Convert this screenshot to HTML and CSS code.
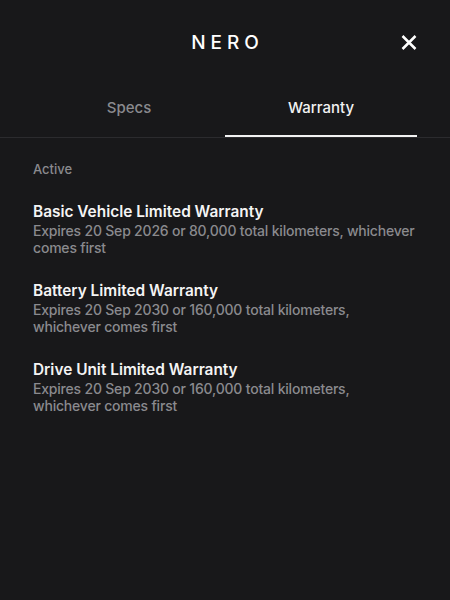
FILE: index.html
```html
<!DOCTYPE html>
<html>
<head>
<meta charset="utf-8">
<link rel="stylesheet" href="styles.css">
</head>
<body>
<div class="panel">
  <header class="header">
    <h1 class="title">NERO</h1>
    <button class="close" aria-label="Close">
      <svg width="16" height="15" viewBox="0 0 16 15"><path d="M1.5 1L14.5 14M14.5 1L1.5 14" stroke="#fff" stroke-width="2.5"/></svg>
    </button>
  </header>
  <nav class="tabs">
    <div class="tab">Specs</div>
    <div class="tab active">Warranty</div>
  </nav>
  <main class="content">
    <div class="section-label">Active</div>
    <div class="item">
      <div class="item-title">Basic Vehicle Limited Warranty</div>
      <div class="item-desc">Expires 20 Sep 2026 or 80,000 total kilometers, whichever comes first</div>
    </div>
    <div class="item">
      <div class="item-title">Battery Limited Warranty</div>
      <div class="item-desc">Expires 20 Sep 2030 or 160,000 total kilometers, whichever comes first</div>
    </div>
    <div class="item">
      <div class="item-title">Drive Unit Limited Warranty</div>
      <div class="item-desc">Expires 20 Sep 2030 or 160,000 total kilometers, whichever comes first</div>
    </div>
  </main>
</div>
</body>
</html>
```
FILE: styles.css
```css
html, body {
  margin: 0;
  padding: 0;
  background: #18181a;
}
body {
  font-family: Inter, "Noto Sans", sans-serif;
  color: #fff;
  width: 450px;
  height: 600px;
  overflow: hidden;
}
.panel {
  display: flex;
  flex-direction: column;
}
.header {
  position: relative;
  height: 84px;
  display: flex;
  align-items: center;
  justify-content: center;
}
.title {
  margin: 0;
  font-size: 19px;
  font-weight: 500;
  letter-spacing: 5px;
  padding-left: 5px;
}
.close {
  position: absolute;
  right: 33px;
  top: 35px;
  background: none;
  border: 0;
  padding: 0;
  width: 16px;
  height: 15px;
  display: flex;
}
.tabs {
  display: flex;
  padding: 0 33px;
  border-bottom: 1px solid #2b2b2e;
}
.tab {
  flex: 1;
  text-align: center;
  font-size: 15px;
  font-weight: 500;
  color: #8a8a8e;
  height: 53px;
  line-height: 48px;
  box-sizing: border-box;
}
.tab.active {
  color: #f2f2f2;
  border-bottom: 2px solid #f2f2f2;
  margin-bottom: -1px;
  line-height: 48px;
}
.content {
  padding: 23px 33px 0;
}
.section-label {
  font-size: 13px;
  font-weight: 500;
  color: #8a8a8e;
  line-height: 16px;
  margin-bottom: 25px;
}
.item {
  margin-bottom: 25px;
}
.item-title {
  font-size: 15.4px;
  font-weight: 600;
  color: #f4f4f4;
  line-height: 20px;
}
.item-desc {
  font-size: 14px;
  color: #8a8a8e;
  line-height: 17px;
  font-weight: 500;
  letter-spacing: -0.2px;
}
```
